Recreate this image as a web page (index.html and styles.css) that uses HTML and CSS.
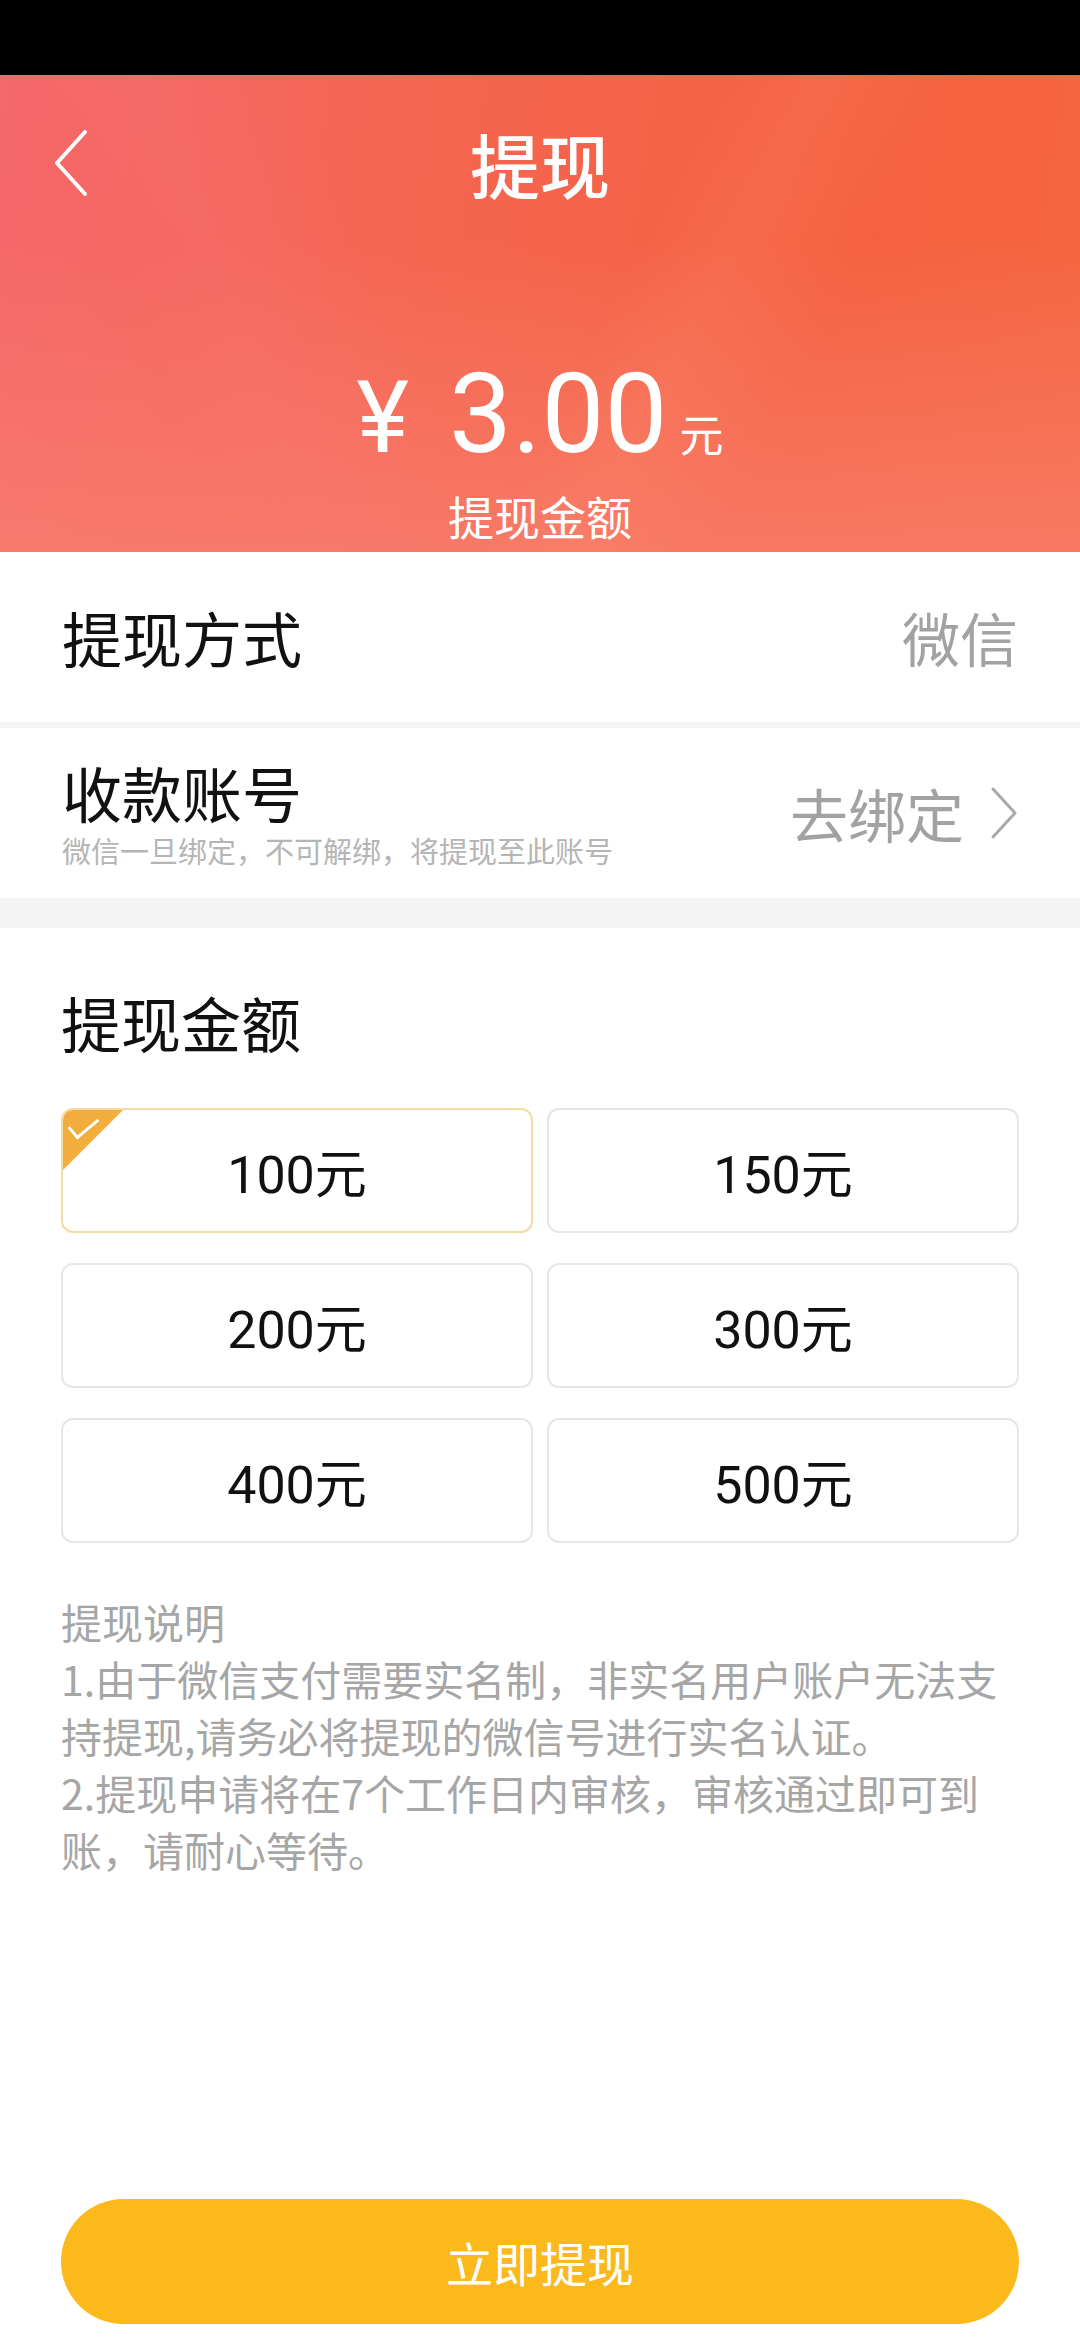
FILE: index.html
```html
<!DOCTYPE html>
<html lang="zh-CN">
<head>
    <meta charset="UTF-8">
    <meta name="viewport" content="width=device-width, initial-scale=1.0">
    <title>提现</title>
    <link rel="stylesheet" href="styles.css">
</head>
<body>
    <div class="page">
        <div class="status-bar"></div>

        <header class="hero">
            <div class="nav">
                <a class="back" href="#">
                    <svg width="40" height="70" viewBox="0 0 40 70">
                        <polyline points="33,3 5,34 33,65" fill="none" stroke="#fff" stroke-width="4" stroke-linecap="round" stroke-linejoin="round"/>
                    </svg>
                </a>
                <h1>提现</h1>
                <span></span>
            </div>
            <div class="balance">
                <span class="yen">¥</span><span class="num">3.00</span><span class="unit">元</span>
            </div>
            <div class="balance-label">提现金额</div>
        </header>

        <div class="row">
            <span class="row-title">提现方式</span>
            <span class="row-value">微信</span>
        </div>
        <div class="row row-account">
            <div>
                <div class="row-title">收款账号</div>
                <div class="row-tip">微信一旦绑定，不可解绑，将提现至此账号</div>
            </div>
            <a class="row-value bind" href="#">
                去绑定
                <svg width="28" height="54" viewBox="0 0 28 54">
                    <polyline points="3,3 25,27 3,51" fill="none" stroke="#a9a9a9" stroke-width="3" stroke-linecap="round" stroke-linejoin="round"/>
                </svg>
            </a>
        </div>

        <section class="amounts">
            <h2>提现金额</h2>
            <div class="amount-grid" id="amountGrid">
                <div class="amount-item active">100元</div>
                <div class="amount-item">150元</div>
                <div class="amount-item">200元</div>
                <div class="amount-item">300元</div>
                <div class="amount-item">400元</div>
                <div class="amount-item">500元</div>
            </div>

            <div class="notes">
                <p>提现说明</p>
                <p>1.由于微信支付需要实名制，非实名用户账户无法支<br>持提现,请务必将提现的微信号进行实名认证。</p>
                <p>2.提现申请将在7个工作日内审核，审核通过即可到<br>账，请耐心等待。</p>
            </div>
        </section>

        <div class="footer">
            <button class="submit" onclick="submitWithdraw()">立即提现</button>
        </div>
    </div>

    <script>
        let items = document.querySelectorAll('.amount-item');
        items.forEach(item => {
            item.onclick = function() {
                items.forEach(i => i.classList.remove('active'));
                item.classList.add('active');
            };
        });

        function submitWithdraw() {
            let selected = document.querySelector('.amount-item.active');
            console.log("Withdraw:", selected ? selected.textContent : "");
        }
    </script>
</body>
</html>
```

FILE: styles.css
```css
* {
    box-sizing: border-box;
}
body {
    margin: 0;
    font-family: Roboto, "Noto Sans CJK SC", sans-serif;
    background: #fff;
    color: #111;
}
a {
    text-decoration: none;
}
.page {
    min-height: 2340px;
    display: flex;
    flex-direction: column;
}
.status-bar {
    height: 75px;
    background: #000;
}

/* header */
.hero {
    height: 477px;
    color: #fff;
    text-align: center;
    background:
        linear-gradient(68deg, rgba(255,255,255,0) 18%, rgba(248,118,125,0.2) 26%, rgba(255,255,255,0) 38%),
        linear-gradient(118deg, rgba(255,255,255,0) 55%, rgba(255,150,120,0.15) 62%, rgba(255,255,255,0) 72%),
        linear-gradient(to bottom, rgba(248,128,112,0) 35%, rgba(248,128,112,0.75) 100%),
        linear-gradient(100deg, #f5686b 0%, #f5654f 40%, #f5613f 75%, #f5663f 100%);
}
.nav {
    height: 178px;
    display: grid;
    grid-template-columns: 1fr auto 1fr;
    align-items: center;
}
.back {
    justify-self: start;
    margin-left: 52px;
    display: flex;
}
.nav h1 {
    margin: 0;
    font-size: 70px;
    font-weight: 500;
    line-height: 1;
    font-family: "Noto Sans CJK SC", sans-serif;
}
.balance {
    margin-top: 105px;
    line-height: 1;
    font-size: 112px;
}
.balance .yen {
    font-size: 100px;
    margin-right: 40px;
}
.balance .unit {
    font-size: 44px;
    margin-left: 12px;
    font-family: "Noto Sans CJK SC", sans-serif;
}
.balance-label {
    margin-top: 22px;
    font-size: 46px;
    line-height: 1;
    font-family: "Noto Sans CJK SC", sans-serif;
}

/* rows */
.row {
    height: 176px;
    padding: 0 62px;
    display: flex;
    align-items: center;
    justify-content: space-between;
    border-bottom: 6px solid #f4f4f4;
}
.row-account {
    height: 200px;
    border-bottom-width: 30px;
}
.row-title {
    font-size: 60px;
    line-height: 1;
    font-family: "Noto Sans CJK SC", sans-serif;
}
.row-value {
    font-size: 58px;
    line-height: 1;
    color: #a2a2a2;
    font-family: "Noto Sans CJK SC", sans-serif;
}
.row-tip {
    margin-top: 14px;
    font-size: 29px;
    line-height: 1;
    color: #b5b5b5;
    font-family: "Noto Sans CJK SC", sans-serif;
}
.bind {
    display: flex;
    align-items: center;
    gap: 26px;
    color: #a2a2a2;
}

/* amounts */
.amounts {
    padding: 64px 61px 0;
}
.amounts h2 {
    margin: 0;
    font-size: 60px;
    font-weight: 400;
    line-height: 1;
    font-family: "Noto Sans CJK SC", sans-serif;
}
.amount-grid {
    margin-top: 56px;
    display: grid;
    grid-template-columns: 1fr 1fr;
    column-gap: 14px;
    row-gap: 30px;
}
.amount-item {
    position: relative;
    height: 125px;
    border: 2px solid #e6e6e6;
    border-radius: 12px;
    display: flex;
    align-items: center;
    justify-content: center;
    font-size: 52px;
    color: #111;
    cursor: pointer;
    overflow: hidden;
}
.amount-item.active {
    border: 2px solid #f3dca2;
}
.amount-item.active::before {
    content: "";
    position: absolute;
    left: 0;
    top: 0;
    width: 60px;
    height: 60px;
    background: #f2ad3c;
    clip-path: polygon(0 0, 100% 0, 0 100%);
}
.amount-item.active::after {
    content: "";
    position: absolute;
    left: 6px;
    top: 7px;
    width: 26px;
    height: 12px;
    border-left: 3px solid #fff;
    border-bottom: 3px solid #fff;
    transform: rotate(-40deg);
}

.notes {
    margin-top: 50px;
    margin-right: -20px;
    font-size: 41px;
    line-height: 57px;
    color: #a6a6a6;
    font-family: "Noto Sans CJK SC", sans-serif;
    white-space: nowrap;
}
.notes p {
    margin: 0;
}

/* bottom button */
.footer {
    margin-top: auto;
    padding: 0 61px 16px;
}
.submit {
    width: 100%;
    height: 125px;
    border: none;
    border-radius: 63px;
    background: #fcb91c;
    color: #fff;
    font-size: 47px;
    font-family: "Noto Sans CJK SC", sans-serif;
    cursor: pointer;
}
```
